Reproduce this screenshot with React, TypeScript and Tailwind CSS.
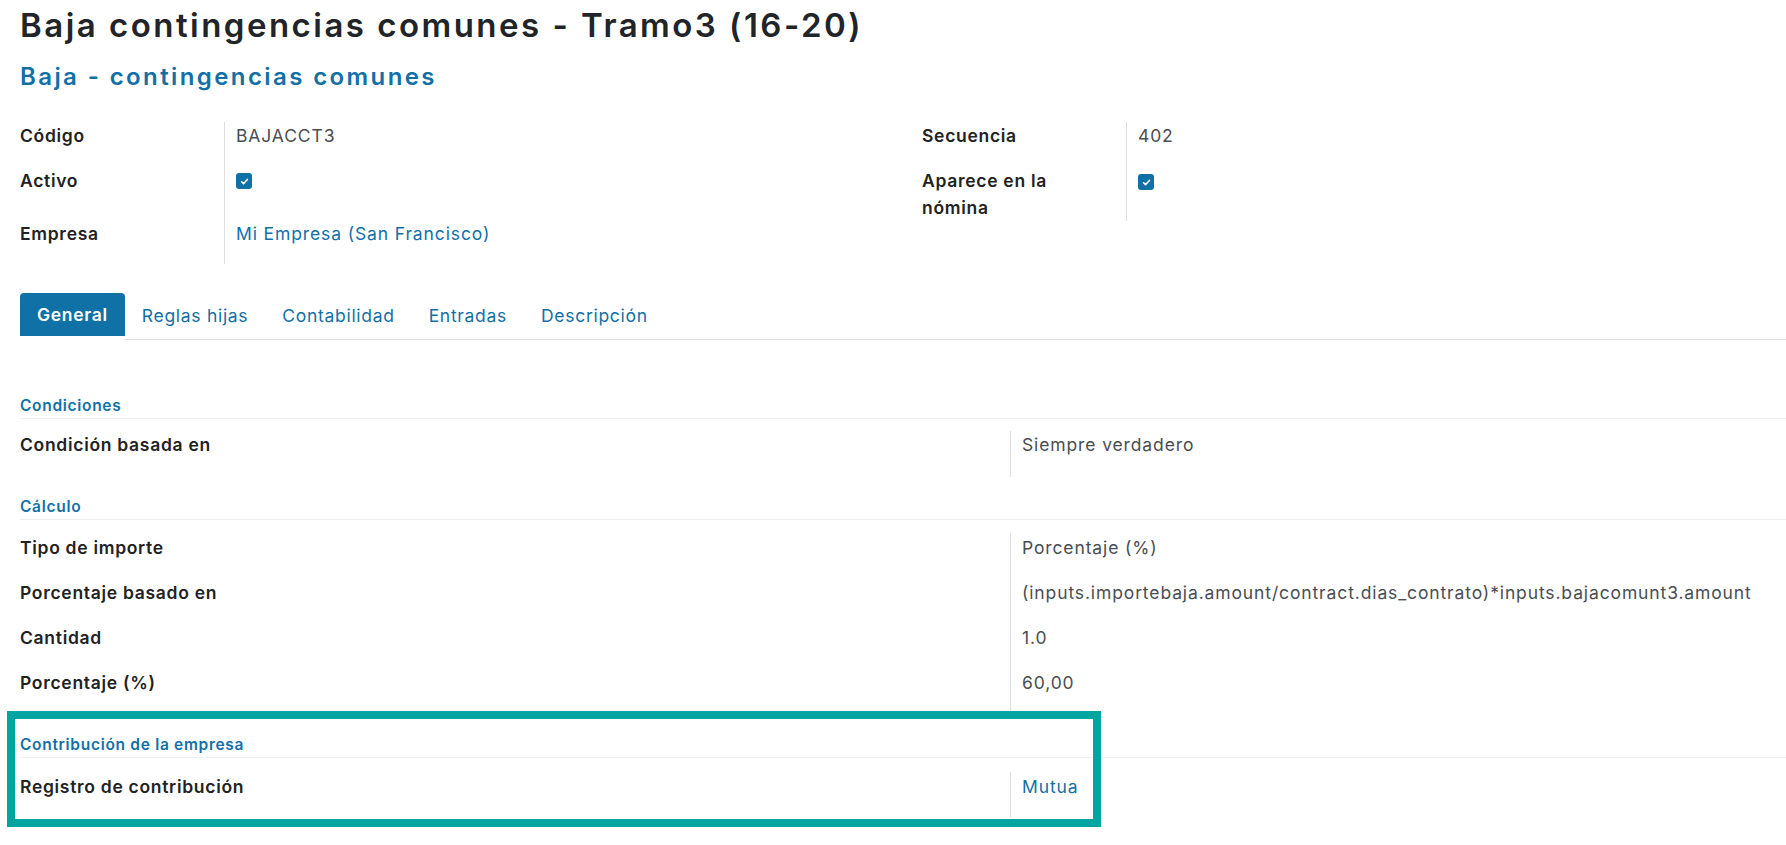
import * as React from "react";

function Check() {
    return (
        <span className="flex h-[16px] w-[16px] items-center justify-center rounded-[3px] bg-[#0f71a6]">
            <svg viewBox="0 0 16 16" className="h-[11px] w-[11px]">
                <path d="M3.8 8.4l2.8 2.8 5.6-6.2" stroke="white" strokeWidth="2.4" fill="none" strokeLinecap="round" strokeLinejoin="round" />
            </svg>
        </span>
    );
}

function SectionHeader({ children, className = "" }: { children: React.ReactNode; className?: string }) {
    return (
        <div className={`flex h-[43px] items-end border-b border-[#eeeff1] ${className}`}>
            <span className="pb-[2px] text-[15.5px] font-semibold leading-[20px] tracking-[0.045em] text-[#1270a6]">{children}</span>
        </div>
    );
}

function Row({ label, children }: { label: string; children: React.ReactNode }) {
    return (
        <div className="grid h-[45px] grid-cols-[990px_1fr]">
            <div className="pt-[1px] text-[17.5px] font-semibold leading-[27px] tracking-[0.04em] text-[#222]">{label}</div>
            <div className="border-l border-[#dcdee1] pl-[11px] pt-[1px] text-[17.5px] leading-[27px] tracking-[0.05em] text-[#4a4d52]">{children}</div>
        </div>
    );
}

export default function App() {
    return (
        <div className="relative min-h-screen w-full overflow-hidden bg-white pl-[20px] font-['Inter',sans-serif]">
            {/* header */}
            <h1 className="pt-[6px] text-[33px] font-semibold leading-[39px] tracking-[0.075em] text-[#212529]">
                Baja contingencias comunes - Tramo3 (16-20)
            </h1>
            <h2 className="mt-[18px] text-[24px] font-semibold leading-[28px] tracking-[0.1em] text-[#1270a6]">
                Baja - contingencias comunes
            </h2>

            {/* top groups */}
            <div className="mt-[31px] grid grid-cols-[902px_1fr]">
                <div className="grid grid-cols-[204px_1fr] text-[17.5px] leading-[27px]">
                    <div className="h-[45px] font-semibold tracking-[0.04em] text-[#222]">Código</div>
                    <div className="h-[45px] border-l border-[#dcdee1] pl-[11px] tracking-[0.05em] text-[#4a4d52]">BAJACCT3</div>
                    <div className="h-[53px] font-semibold tracking-[0.04em] text-[#222]">Activo</div>
                    <div className="flex h-[53px] items-start border-l border-[#dcdee1] pl-[11px] pt-[6px]">
                        <Check />
                    </div>
                    <div className="h-[44px] font-semibold tracking-[0.04em] text-[#222]">Empresa</div>
                    <div className="h-[44px] border-l border-[#dcdee1] pl-[11px] tracking-[0.05em] text-[#1270a6]">Mi Empresa (San Francisco)</div>
                </div>
                <div className="grid grid-cols-[204px_1fr] self-start text-[17.5px] leading-[27px]">
                    <div className="h-[46px] font-semibold tracking-[0.04em] text-[#222]">Secuencia</div>
                    <div className="h-[46px] border-l border-[#dcdee1] pl-[11px] tracking-[0.05em] text-[#4a4d52]">402</div>
                    <div className="h-[53px] font-semibold leading-[26.5px] tracking-[0.04em] text-[#222]">
                        <span className="block max-w-[160px]">Aparece en la nómina</span>
                    </div>
                    <div className="flex h-[53px] items-start border-l border-[#dcdee1] pl-[11px] pt-[6px]">
                        <Check />
                    </div>
                </div>
            </div>

            {/* tabs */}
            <div className="mt-[29px] flex items-start text-[17.5px] tracking-[0.04em]">
                <div className="h-[43px] rounded-t-[4px] bg-[#0f71a6] px-[17px] font-semibold leading-[43px] text-white">General</div>
                <div className="h-[47px] border-b border-[#dee0e3] px-[17px] leading-[45px] text-[#1270a6]">Reglas hijas</div>
                <div className="h-[47px] border-b border-[#dee0e3] px-[17px] leading-[45px] text-[#1270a6]">Contabilidad</div>
                <div className="h-[47px] border-b border-[#dee0e3] px-[17px] leading-[45px] text-[#1270a6]">Entradas</div>
                <div className="h-[47px] border-b border-[#dee0e3] px-[17px] leading-[45px] text-[#1270a6]">Descripción</div>
                <div className="h-[47px] flex-1 border-b border-[#dee0e3]" />
            </div>

            {/* general tab */}
            <SectionHeader className="mt-[36px]">Condiciones</SectionHeader>
            <div className="mt-[12px]">
                <div className="grid h-[46px] grid-cols-[990px_1fr]">
                    <div className="text-[17.5px] font-semibold leading-[27px] tracking-[0.04em] text-[#222]">Condición basada en</div>
                    <div className="border-l border-[#dcdee1] pl-[11px] text-[17.5px] leading-[27px] tracking-[0.05em] text-[#4a4d52]">Siempre verdadero</div>
                </div>
            </div>

            <SectionHeader>Cálculo</SectionHeader>
            <div className="mt-[13px]">
                <Row label="Tipo de importe">Porcentaje (%)</Row>
                <Row label="Porcentaje basado en">(inputs.importebaja.amount/contract.dias_contrato)*inputs.bajacomunt3.amount</Row>
                <Row label="Cantidad">1.0</Row>
                <Row label="Porcentaje (%)">60,00</Row>
            </div>

            <SectionHeader className="mt-[2px]">Contribución de la empresa</SectionHeader>
            <div className="mt-[14px]">
                <Row label="Registro de contribución">
                    <span className="text-[#1270a6]">Mutua</span>
                </Row>
            </div>

            {/* highlight annotation */}
            <div className="pointer-events-none absolute left-[7px] top-[711px] h-[116px] w-[1094px] border-[8px] border-[#00a59f]" />
        </div>
    );
}
